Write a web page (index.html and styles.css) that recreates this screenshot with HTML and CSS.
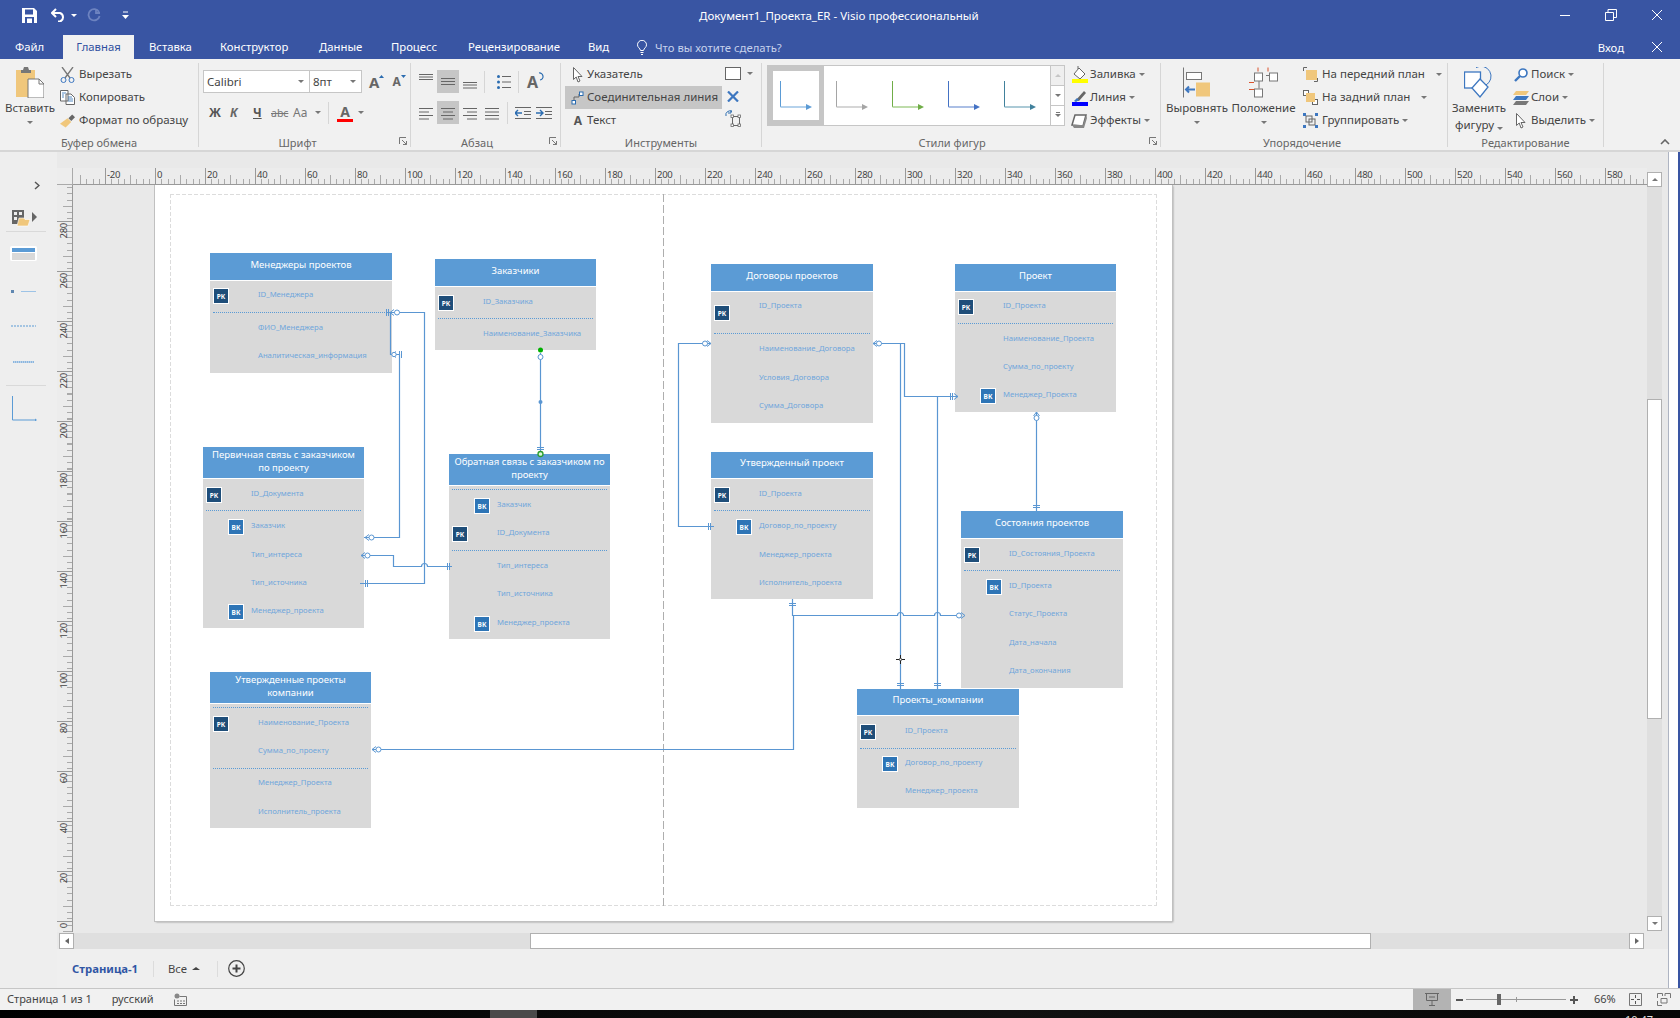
FILE: index.html
```html
<!DOCTYPE html>
<html lang="ru">
<head>
<meta charset="utf-8">
<title>Документ1_Проекта_ER - Visio профессиональный</title>
<link rel="stylesheet" href="styles.css">
</head>
<body>
<div class="app">
  <header class="titlebar">
    <div class="qat">
      <svg class="q-save" width="15" height="15" viewBox="0 0 15 15"><path d="M0 0H12L15 3V15H0Z" fill="#fff"/><rect x="3" y="1.5" width="8" height="5" fill="#3955a3"/><rect x="3" y="9" width="9" height="6" fill="#3955a3"/><rect x="5" y="10.5" width="5" height="4.5" fill="#fff"/></svg>
      <svg class="q-undo" width="15" height="14" viewBox="0 0 15 14"><path d="M5 1L1 5L5 9M1 5H9A4.5 4.5 0 0 1 9 13.5H7" fill="none" stroke="#fff" stroke-width="2"/></svg>
      <span class="caret white q-c1"></span>
      <svg class="q-redo" width="14" height="14" viewBox="0 0 14 14"><path d="M9 1V5H13M12 4A5.6 5.6 0 1 0 12.6 8" fill="none" stroke="#6d83c0" stroke-width="1.8"/></svg>
      <svg class="q-more" width="7" height="8" viewBox="0 0 7 8"><path d="M1 1H6" stroke="#fff"/><path d="M0 4H7L3.500 8Z" fill="#fff"/></svg>
    </div>
    <div class="doc-title">Документ1_Проекта_ER - Visio профессиональный</div>
    <div class="winctl">
      <svg width="12" height="12" viewBox="0 0 12 12"><path d="M1 6.500H11" stroke="#fff"/></svg>
      <svg width="12" height="12" viewBox="0 0 12 12"><path d="M.5 3.500H8.500V11.500H.5ZM3 3.500V.5H11.500V8.500H8.500" fill="none" stroke="#fff"/></svg>
      <svg width="12" height="12" viewBox="0 0 12 12"><path d="M1 1L11 11M11 1L1 11" stroke="#fff"/></svg>
    </div>
  </header>
  <nav class="tabs">
    <span class="tab t-file">Файл</span>
    <span class="tab active">Главная</span>
    <span class="tab t-ins">Вставка</span>
    <span class="tab t-des">Конструктор</span>
    <span class="tab t-dat">Данные</span>
    <span class="tab t-pro">Процесс</span>
    <span class="tab t-rev">Рецензирование</span>
    <span class="tab t-vid">Вид</span>
    <svg class="lamp" width="10" height="15" viewBox="0 0 10 15"><path d="M3.500 10.500C3 8 .5 7.500.5 4.800A4.500 4.500 0 0 1 9.500 4.800C9.500 7.500 7 8 6.500 10.500ZM3.500 12.500H6.500M4 14.500H6" fill="none" stroke="#fff"/></svg>
    <span class="tell">Что вы хотите сделать?</span>
    <span class="login">Вход</span>
    <svg class="login-x" width="12" height="12" viewBox="0 0 12 12"><path d="M1 1L11 11M11 1L1 11" stroke="#fff"/></svg>
  </nav>

  <section class="ribbon">
    <div class="group g1">
      <div class="content">
        <div class="big b-paste">
          <svg width="28" height="31" viewBox="0 0 28 31"><path d="M0 3H19V30H0Z" fill="#f0c77c"/><path d="M5 3H7L8 0H12L13 3H15V6H5Z" fill="#777"/><path d="M12 12H23L28 17V31H12Z" fill="#fff" stroke="#777"/><path d="M23 12V17H28" fill="none" stroke="#777"/></svg>
          <span>Вставить</span><i class="caret"></i>
        </div>
        <div class="stack s1">
          <div class="cmd"><svg width="15" height="16" viewBox="0 0 15 16"><path d="M2 0L10 11M13 0L5 11" stroke="#777" stroke-width="1.300"/><circle cx="3.500" cy="13" r="2.500" fill="none" stroke="#3d77c0"/><circle cx="11.500" cy="13" r="2.500" fill="none" stroke="#3d77c0"/></svg><span>Вырезать</span></div>
          <div class="cmd"><svg width="15" height="15" viewBox="0 0 15 15"><path d="M.5.5H8V11H.5ZM6 4H11L14.500 7.500V14.500H6Z" fill="#fff" stroke="#666"/><path d="M2 3H6M2 5H4M2 7H4M8 7H12M8 9H13M8 11H13" stroke="#2b6cb0" stroke-width=".8"/></svg><span>Копировать</span></div>
          <div class="cmd"><svg width="16" height="14" viewBox="0 0 16 14"><path d="M0 10L8 4L12 8L6 14Z" fill="#f0c77c"/><path d="M9 4L13 0L16 3L12 7Z" fill="#666"/></svg><span>Формат по образцу</span></div>
        </div>
      </div>
      <div class="glabel">Буфер обмена</div>
    </div>
    <i class="gsep"></i>
    <div class="group g2">
      <div class="content col">
        <div class="fontrow">
          <div class="combo c-font">Calibri<i class="caret"></i></div>
          <div class="combo c-size">8пт<i class="caret"></i></div>
          <span class="grow">A<svg width="5" height="3" viewBox="0 0 5 3"><path d="M0 3L2.500 0L5 3Z" fill="#2b6cb0"/></svg></span>
          <span class="shrink">A<svg width="5" height="3" viewBox="0 0 5 3"><path d="M0 0L2.500 3L5 0Z" fill="#2b6cb0"/></svg></span>
        </div>
        <div class="fmtrow">
          <b class="f-b">Ж</b><b class="f-i">К</b><b class="f-u">Ч</b><span class="f-s">abc</span><span class="f-a">Аа</span><i class="caret"></i><i class="vsep"></i>
          <span class="f-color">A</span><i class="caret"></i>
        </div>
      </div>
      <div class="glabel">Шрифт</div>
      <svg class="launcher" width="8" height="8" viewBox="0 0 8 8"><path d="M.5 7V.5H7M3 3L7.500 7.500M7.500 4V7.500H4" fill="none" stroke="#777"/></svg>
    </div>
    <i class="gsep"></i>
    <div class="group g3">
      <div class="content col">
        <div class="prow">
          <span class="pc"><svg width="14" height="23" viewBox="0 0 14 23"><path d="M0 4.500H14M0 7H14M0 9.500H14" stroke="#666"/></svg></span>
          <span class="pc on"><svg width="14" height="23" viewBox="0 0 14 23"><path d="M0 8.500H14M0 11.500H14M0 14.500H14" stroke="#666"/></svg></span>
          <span class="pc"><svg width="14" height="23" viewBox="0 0 14 23"><path d="M0 12.500H14M0 15H14M0 18H14" stroke="#666"/></svg></span>
          <i class="vsep"></i>
          <span class="pc nar"><svg width="14" height="16" viewBox="0 0 14 16"><path d="M5 2.500H14M5 8H14M5 13.500H14" stroke="#666"/><circle cx="1.500" cy="2.500" r="1.500" fill="#2b6cb0"/><circle cx="1.500" cy="8" r="1.500" fill="#2b6cb0"/><circle cx="1.500" cy="13.500" r="1.500" fill="#2b6cb0"/></svg></span>
          <i class="vsep"></i>
          <span class="rotA">A<svg width="7" height="9" viewBox="0 0 7 9"><path d="M1 1A3.500 3.500 0 1 1 2 8" fill="none" stroke="#2b6cb0" stroke-width="1.200"/></svg></span>
        </div>
        <div class="prow r2">
          <span class="pc"><svg width="14" height="14" viewBox="0 0 14 14"><path d="M0 2.500H14M0 6H10M0 9.500H14M0 13H10" stroke="#666"/></svg></span>
          <span class="pc on"><svg width="14" height="14" viewBox="0 0 14 14"><path d="M0 2.500H14M2 6H12M0 9.500H14M2 13H12" stroke="#666"/></svg></span>
          <span class="pc"><svg width="14" height="14" viewBox="0 0 14 14"><path d="M0 2.500H14M4 6H14M0 9.500H14M4 13H14" stroke="#666"/></svg></span>
          <span class="pc"><svg width="14" height="14" viewBox="0 0 14 14"><path d="M0 2.500H14M0 6H14M0 9.500H14M0 13H14" stroke="#666"/></svg></span>
          <i class="vsep"></i>
          <span class="pc ind"><svg width="16" height="14" viewBox="0 0 16 14"><path d="M0 7H7M3 4L0 7L3 10" fill="none" stroke="#2b6cb0" stroke-width="1.400"/><path d="M0 1.500H16M9 5.500H16M9 8.500H16M0 12.500H16" stroke="#666"/></svg></span>
          <span class="pc ind2"><svg width="16" height="14" viewBox="0 0 16 14"><path d="M0 7H7M4 4L7 7L4 10" fill="none" stroke="#2b6cb0" stroke-width="1.400"/><path d="M0 1.500H16M9 5.500H16M9 8.500H16M0 12.500H16" stroke="#666"/></svg></span>
        </div>
      </div>
      <div class="glabel">Абзац</div>
      <svg class="launcher" width="8" height="8" viewBox="0 0 8 8"><path d="M.5 7V.5H7M3 3L7.500 7.500M7.500 4V7.500H4" fill="none" stroke="#777"/></svg>
    </div>
    <i class="gsep"></i>
    <div class="group g4">
      <div class="content">
        <div class="stack s4">
          <div class="tool"><svg width="10" height="16" viewBox="0 0 10 16"><path d="M.5.5V12.500L3.200 10L5 15L7 14L5 9.500H9Z" fill="#fff" stroke="#666"/></svg><span>Указатель</span></div>
          <div class="tool sel"><svg width="14" height="14" viewBox="0 0 14 14"><path d="M3 9.500V6H8V3" fill="none" stroke="#666"/><rect x="1" y="9.500" width="3.500" height="3.500" fill="#fff" stroke="#2b6cb0"/><rect x="8.500" y="1" width="3.500" height="3.500" fill="#fff" stroke="#2b6cb0"/></svg><span>Соединительная линия</span></div>
          <div class="tool"><b class="tool-a">A</b><span>Текст</span></div>
        </div>
        <div class="tool-side">
          <div class="ts-top"><i class="rectico"></i><i class="caret"></i></div>
          <svg class="ts-x" width="12" height="11" viewBox="0 0 12 11"><path d="M1 .5L11 10.500M11 .5L1 10.500" stroke="#3d77c0" stroke-width="2.200"/></svg>
          <svg class="ts-r" width="16" height="17" viewBox="0 0 16 17"><path d="M7.500 6.500H14.500V15.500H7.500Z" fill="none" stroke="#666"/><rect x="6" y="5" width="2.500" height="2.500" fill="#fff" stroke="#666" stroke-width=".8"/><rect x="13" y="5" width="2.500" height="2.500" fill="#fff" stroke="#666" stroke-width=".8"/><rect x="6" y="14" width="2.500" height="2.500" fill="#fff" stroke="#666" stroke-width=".8"/><rect x="13" y="14" width="2.500" height="2.500" fill="#fff" stroke="#666" stroke-width=".8"/><path d="M1 6A4 4 0 0 1 7 1.500M6 0V3H3" fill="none" stroke="#2b6cb0"/></svg>
        </div>
      </div>
      <div class="glabel">Инструменты</div>
    </div>
    <i class="gsep"></i>
    <div class="group g5">
      <div class="content">
        <div class="gallery">
          <div class="gcell on"><svg width="32" height="29" viewBox="0 0 32 29"><path d="M.5 0V26" stroke="#5b9bd5"/><path d="M.5 26H26" stroke="#9dc3e6" stroke-width="1.500"/><path d="M26 23L32 26L26 29Z" fill="#5b9bd5"/></svg></div>
          <div class="gcell"><svg width="32" height="29" viewBox="0 0 32 29"><path d="M.5 0V26" stroke="#a5a5a5"/><path d="M.5 26H26" stroke="#c9c9c9" stroke-width="1.500"/><path d="M26 23L32 26L26 29Z" fill="#a5a5a5"/></svg></div>
          <div class="gcell"><svg width="32" height="29" viewBox="0 0 32 29"><path d="M.5 0V26" stroke="#70ad47"/><path d="M.5 26H26" stroke="#a9d18e" stroke-width="1.500"/><path d="M26 23L32 26L26 29Z" fill="#70ad47"/></svg></div>
          <div class="gcell"><svg width="32" height="29" viewBox="0 0 32 29"><path d="M.5 0V26" stroke="#4472c4"/><path d="M.5 26H26" stroke="#8faadc" stroke-width="1.500"/><path d="M26 23L32 26L26 29Z" fill="#4472c4"/></svg></div>
          <div class="gcell"><svg width="32" height="29" viewBox="0 0 32 29"><path d="M.5 0V26" stroke="#41819c"/><path d="M.5 26H26" stroke="#8fb9c9" stroke-width="1.500"/><path d="M26 23L32 26L26 29Z" fill="#41819c"/></svg></div>
          <div class="gscroll">
            <span class="dis"><i class="caret up"></i></span>
            <span><i class="caret"></i></span>
            <span class="more"><i class="caret"></i></span>
          </div>
        </div>
        <div class="stack s5">
          <div class="cmd"><svg width="17" height="18" viewBox="0 0 17 18"><path d="M3 8L8 2L14 8L9 13Z" fill="#fff" stroke="#666"/><path d="M7 3V0" stroke="#666"/><rect x="1" y="13" width="16" height="4" fill="#ffff00"/></svg><span>Заливка</span><i class="caret"></i></div>
          <div class="cmd"><svg width="17" height="18" viewBox="0 0 17 18"><path d="M5 11L13 2L15 4L8 12Z" fill="#666"/><path d="M3 12L6 9L8 11L5 13Z" fill="#3d77c0"/><rect x="1" y="13" width="16" height="4" fill="#0000ff"/></svg><span>Линия</span><i class="caret"></i></div>
          <div class="cmd"><svg width="17" height="16" viewBox="0 0 17 16"><path d="M1 12L4 2H15L12 13Z" fill="#fff" stroke="#666" stroke-width="1.500"/><path d="M1 12H12L15 2L16 5L13 15H3Z" fill="#888"/></svg><span>Эффекты</span><i class="caret"></i></div>
        </div>
      </div>
      <div class="glabel">Стили фигур</div>
      <svg class="launcher" width="8" height="8" viewBox="0 0 8 8"><path d="M.5 7V.5H7M3 3L7.500 7.500M7.500 4V7.500H4" fill="none" stroke="#777"/></svg>
    </div>
    <i class="gsep"></i>
    <div class="group g6">
      <div class="content">
        <div class="big b-align">
          <svg width="28" height="30" viewBox="0 0 28 30"><path d="M.5 0V30" stroke="#777"/><rect x="3.500" y="5" width="15" height="7" fill="#fff" stroke="#777"/><rect x="13" y="15" width="14" height="14" fill="#f0c77c"/><path d="M3 22H12M6 19L3 22L6 25" fill="none" stroke="#3d77c0" stroke-width="2"/></svg>
          <span>Выровнять</span><i class="caret"></i>
        </div>
        <div class="big b-pos">
          <svg width="30" height="30" viewBox="0 0 30 30"><path d="M10 13V21M17 8H21" stroke="#777"/><path d="M9 0V4M19 0V4M0 15H5M0 22H5" stroke="#d9532c"/><rect x="5.500" y="5.500" width="8" height="8" fill="#fff" stroke="#777"/><rect x="20.500" y="5.500" width="8" height="8" fill="#fff" stroke="#777"/><rect x="5.500" y="21.500" width="8" height="8" fill="#fff" stroke="#777"/></svg>
          <span>Положение</span><i class="caret"></i>
        </div>
        <div class="stack s6">
          <div class="cmd"><svg width="15" height="15" viewBox="0 0 15 15"><path d="M.5 4V.5H4M11 14.500H14.500V11" fill="none" stroke="#666"/><rect x="3" y="3" width="11" height="10" fill="#f0c77c"/></svg><span>На передний план</span><i class="caret c-a"></i></div>
          <div class="cmd"><svg width="15" height="15" viewBox="0 0 15 15"><rect x=".5" y=".5" width="5" height="5" fill="#fff" stroke="#666"/><rect x="9.500" y="9.500" width="5" height="5" fill="#fff" stroke="#666"/><rect x="3" y="3" width="9" height="9" fill="#f0c77c"/></svg><span>На задний план</span><i class="caret c-b"></i></div>
          <div class="cmd"><svg width="15" height="15" viewBox="0 0 15 15"><rect x="3" y="3" width="6" height="6" fill="none" stroke="#666"/><rect x="6" y="6" width="6" height="6" fill="none" stroke="#666"/><path d="M0 0H3V3H0ZM12 0H15V3H12ZM0 12H3V15H0ZM12 12H15V15H12Z" fill="#3d77c0"/></svg><span>Группировать</span><i class="caret"></i></div>
        </div>
      </div>
      <div class="glabel">Упорядочение</div>
    </div>
    <i class="gsep"></i>
    <div class="group g7">
      <div class="content">
        <div class="big b-rep">
          <svg width="30" height="31" viewBox="0 0 30 31"><path d="M12 .6A10 10 0 1 1 22 18" fill="none" stroke="#3d77c0"/><rect x=".5" y="5" width="16" height="16" fill="#fff" stroke="#3d77c0" stroke-width="1.300"/><path d="M16 12L24 20L16 30L8 21Z" fill="#fff" stroke="#3d77c0" stroke-width="1.300"/></svg>
          <span>Заменить</span><span class="rep2">фигуру<i class="caret"></i></span>
        </div>
        <div class="stack s7">
          <div class="cmd"><svg width="14" height="14" viewBox="0 0 14 14"><circle cx="9" cy="5" r="4" fill="#fff" stroke="#3d77c0" stroke-width="1.600"/><path d="M6 8L1 13" stroke="#3d77c0" stroke-width="2.400"/></svg><span>Поиск</span><i class="caret"></i></div>
          <div class="cmd"><svg width="16" height="14" viewBox="0 0 16 14"><path d="M3 0H16L13 4H0Z" fill="#f0c77c"/><path d="M3 5H16L13 9H0Z" fill="#3d77c0"/><path d="M3 10H16L13 14H0Z" fill="#777"/></svg><span>Слои</span><i class="caret"></i></div>
          <div class="cmd"><svg width="10" height="16" viewBox="0 0 10 16"><path d="M.5.5V12.500L3.200 10L5 15L7 14L5 9.500H9Z" fill="#fff" stroke="#666"/></svg><span>Выделить</span><i class="caret"></i></div>
        </div>
      </div>
      <div class="glabel">Редактирование</div>
    </div>
    <i class="gsep"></i>
    <svg class="collapse" width="10" height="6" viewBox="0 0 10 6"><path d="M1 5L5 1L9 5" fill="none" stroke="#666" stroke-width="1.600"/></svg>
  </section>

  <main class="work">
    <aside class="stencils">
      <svg class="st-chev" width="6" height="9" viewBox="0 0 6 9"><path d="M1 1L5 4.500L1 8" fill="none" stroke="#555" stroke-width="1.500"/></svg>
      <div class="st-shapes">
        <svg width="26" height="17" viewBox="0 0 26 17"><path d="M0 0H12V14H0Z" fill="#666"/><path d="M2 2H5V5H2ZM7 2H10V5H7ZM2 7H5V10H2Z" fill="#eee"/><path d="M5 16L7 8H12L13 9.500H18L16 16Z" fill="#f0c77c" stroke="#fff" stroke-width=".6"/><path d="M20 2L25 7L20 12Z" fill="#666"/></svg>
      </div>
      <hr class="st-line">
      <div class="st-entity"><i></i><b></b></div>
      <svg class="st-pk" width="25" height="5" viewBox="0 0 25 5"><rect x="0" y="1" width="3" height="3" fill="#5f87b0"/><path d="M10 2.500H25" stroke="#9dc3e6"/></svg>
      <svg class="st-dash" width="25" height="2" viewBox="0 0 25 2"><path d="M0 1H25" stroke="#5b9bd5" stroke-dasharray="2 1"/></svg>
      <svg class="st-txt" width="21" height="4" viewBox="0 0 21 4"><path d="M0 2H21" stroke="#8ab6e0" stroke-width="2" stroke-dasharray="1.500 .5"/></svg>
      <hr class="st-line l2">
      <svg class="st-conn" width="25" height="26" viewBox="0 0 25 26"><path d="M.5 1V25H23" fill="none" stroke="#5b9bd5"/><path d="M23 23.500L25 25L23 26.500Z" fill="#5b9bd5"/></svg>
    </aside>
    <div class="drawing">
      <div class="topgap"></div>
      <div class="corner"></div>
      <div class="hruler">
        <span>-20</span><span>0</span><span>20</span><span>40</span><span>60</span><span>80</span><span>100</span><span>120</span><span>140</span><span>160</span><span>180</span><span>200</span><span>220</span><span>240</span><span>260</span><span>280</span><span>300</span><span>320</span><span>340</span><span>360</span><span>380</span><span>400</span><span>420</span><span>440</span><span>460</span><span>480</span><span>500</span><span>520</span><span>540</span><span>560</span><span>580</span>
      </div>
      <div class="vscroll">
        <span class="sbtn"><i class="caret up"></i></span>
        <div class="vtrack"><div class="vthumb"></div></div>
        <span class="sbtn"><i class="caret"></i></span>
      </div>
      <div class="vruler">
        <span></span><span><em>280</em></span><span><em>260</em></span><span><em>240</em></span><span><em>220</em></span><span><em>200</em></span><span><em>180</em></span><span><em>160</em></span><span><em>140</em></span><span><em>120</em></span><span><em>100</em></span><span><em>80</em></span><span><em>60</em></span><span><em>40</em></span><span><em>20</em></span><span><em>0</em></span>
      </div>
      <div class="canvas">
        <div class="page">
          <div class="printarea"></div>
          <div class="pagebreak"></div>

          <div class="node n-mgr"><div class="hd">Менеджеры проектов</div><div class="bd">
            <div class="row"><i class="pk">РК</i>ID_Менеджера</div><div class="sep"></div>
            <div class="row">ФИО_Менеджера</div>
            <div class="row">Аналитическая_информация</div>
          </div></div>

          <div class="node n-cust"><div class="hd">Заказчики</div><div class="bd">
            <div class="row"><i class="pk">РК</i>ID_Заказчика</div><div class="sep"></div>
            <div class="row">Наименование_Заказчика</div>
          </div></div>

          <div class="node n-prim"><div class="hd two">Первичная связь с заказчиком по проекту</div><div class="bd">
            <div class="row"><i class="pk">РК</i>ID_Документа</div><div class="sep"></div>
            <div class="row"><i class="fk">ВК</i>Заказчик</div>
            <div class="row">Тип_интереса</div>
            <div class="row">Тип_источника</div>
            <div class="row"><i class="fk">ВК</i>Менеджер_проекта</div>
          </div></div>

          <div class="node n-back"><div class="hd two">Обратная связь с заказчиком по проекту</div><div class="bd">
            <div class="sep"></div>
            <div class="row"><i class="fk">ВК</i>Заказчик</div>
            <div class="row"><i class="pk">РК</i>ID_Документа</div><div class="sep"></div>
            <div class="row">Тип_интереса</div>
            <div class="row">Тип_источника</div>
            <div class="row"><i class="fk">ВК</i>Менеджер_проекта</div>
          </div></div>

          <div class="node n-dog"><div class="hd">Договоры проектов</div><div class="bd">
            <div class="row tall"><i class="pk">РК</i><span>ID_Проекта</span></div><div class="sep"></div>
            <div class="row">Наименование_Договора</div>
            <div class="row">Условия_Договора</div>
            <div class="row">Сумма_Договора</div>
          </div></div>

          <div class="node n-prj"><div class="hd">Проект</div><div class="bd">
            <div class="row"><i class="pk">РК</i>ID_Проекта</div><div class="sep"></div>
            <div class="row">Наименование_Проекта</div>
            <div class="row">Сумма_по_проекту</div>
            <div class="row"><i class="fk">ВК</i>Менеджер_Проекта</div>
          </div></div>

          <div class="node n-utv"><div class="hd h26">Утвержденный проект</div><div class="bd">
            <div class="row"><i class="pk">РК</i>ID_Проекта</div><div class="sep"></div>
            <div class="row"><i class="fk">ВК</i>Договор_по_проекту</div>
            <div class="row">Менеджер_проекта</div>
            <div class="row">Исполнитель_проекта</div>
          </div></div>

          <div class="node n-sost"><div class="hd">Состояния проектов</div><div class="bd">
            <div class="row"><i class="pk">РК</i>ID_Состояния_Проекта</div><div class="sep"></div>
            <div class="row"><i class="fk">ВК</i>ID_Проекта</div>
            <div class="row">Статус_Проекта</div>
            <div class="row">Дата_начала</div>
            <div class="row">Дата_окончания</div>
          </div></div>

          <div class="node n-comp"><div class="hd h26">Проекты_компании</div><div class="bd">
            <div class="row"><i class="pk">РК</i>ID_Проекта</div><div class="sep"></div>
            <div class="row"><i class="fk">ВК</i>Договор_по_проекту</div>
            <div class="row">Менеджер_проекта</div>
          </div></div>

          <div class="node n-appr"><div class="hd two">Утвержденные проекты компании</div><div class="bd">
            <div class="sep"></div>
            <div class="row"><i class="pk">РК</i>Наименование_Проекта</div>
            <div class="row">Сумма_по_проекту</div><div class="sep"></div>
            <div class="row">Менеджер_Проекта</div>
            <div class="row">Исполнитель_проекта</div>
          </div></div>

          <svg class="links" width="1017" height="736" viewBox="155 185 1017 736">
            <g class="ln">
              <path d="M386.500 312.500H424.500V583.500H360"/>
              <path d="M390.500 312.500V354.500H399.500V537.500H364"/>
              <path d="M361 555.500H393.500V566.500H421.500a2.500 2.500 0 0 1 6 0H452"/>
              <path d="M540.500 353V452"/>
              <path d="M711 343.500H678.500V526.500H714"/>
              <path d="M873 343.500H904.500V396.500H958"/>
              <path d="M900.500 343.500V689"/>
              <path d="M937.500 396.500V689"/>
              <path d="M1036.500 412V511"/>
              <path d="M792.500 599V615.500H897.500a3 3 0 0 1 6 0H934.500a3 3 0 0 1 6 0H962"/>
              <path d="M793.500 615.500V749.500H372"/>
            </g>
            <g class="mk">
              <path d="M386.500 309V316M388.500 309V316M390 312.500L394 309.500M390 312.500L394 315.500"/>
              <circle cx="397" cy="312.500" r="2.500"/>
              <path d="M399.500 351V358M401.500 351V358M392 354.500L396 351.500M392 354.500L396 357.500"/>
              <circle cx="394" cy="354.500" r="2.200"/>
              <path d="M365 537.500L369 534.500M365 537.500L369 540.500"/>
              <circle cx="371.500" cy="537.500" r="2.500"/>
              <path d="M361 555.500L365 552.500M361 555.500L365 558.500"/>
              <circle cx="367.500" cy="555.500" r="2.500"/>
              <path d="M365.500 580V587M367.500 580V587"/>
              <path d="M447.500 563V570M449.500 563V570"/>
              <circle cx="540.500" cy="357" r="2.500"/>
              <path d="M537 447.500H544M537 449.500H544"/>
              <path d="M711 343.500L707 340.500M711 343.500L707 346.500"/>
              <circle cx="705" cy="343.500" r="2.500"/>
              <path d="M708.500 523V530M710.500 523V530"/>
              <path d="M873 343.500L877 340.500M873 343.500L877 346.500"/>
              <circle cx="879" cy="343.500" r="2.500"/>
              <path d="M952.500 393V400M950.500 393V400M958 396.500L954 393.500M958 396.500L954 399.500"/>
              <path d="M897 683.500H904M897 685.500H904M934 683.500H941M934 685.500H941"/>
              <path d="M1036.500 412L1033.500 416M1036.500 412L1039.500 416"/>
              <circle cx="1036.500" cy="418" r="2.500"/>
              <path d="M1033 505.500H1040M1033 507.500H1040"/>
              <path d="M789 603.500H796M789 605.500H796"/>
              <path d="M965 615.500L961 612.500M965 615.500L961 618.500"/>
              <circle cx="959" cy="615.500" r="2.500"/>
              <path d="M372 749.500L376 746.500M372 749.500L376 752.500"/>
              <circle cx="378.500" cy="749.500" r="2.500"/>
            </g>
            <circle class="dot" cx="540.500" cy="402" r="2"/>
            <circle class="gr" cx="540.500" cy="350" r="2.500"/>
            <circle class="gr2" cx="540.500" cy="454" r="2.500"/>
            <path class="cur" d="M896 659.500H905M900.500 655V664"/>
            <circle class="curc" cx="900.500" cy="659.500" r="1.200"/>
          </svg>
        </div>
      </div>
      <div class="hscroll">
        <span class="sbtn"><i class="caret left"></i></span>
        <div class="htrack"><div class="hthumb"></div></div>
        <span class="sbtn"><i class="caret right"></i></span>
      </div>
      <div class="pagetabs">
        <span class="ptab">Страница-1</span>
        <i class="psep"></i>
        <span class="pall">Все<i class="caret up dark"></i></span>
        <i class="psep"></i>
        <svg class="padd" width="17" height="17" viewBox="0 0 17 17"><circle cx="8.500" cy="8.500" r="7.800" fill="none" stroke="#444" stroke-width="1.200"/><path d="M8.500 4.500V12.500M4.500 8.500H12.500" stroke="#444" stroke-width="2"/></svg>
      </div>
    </div>
    <div class="strip"></div>
  </main>

  <footer class="status">
    <span class="st-page">Страница 1 из 1</span>
    <span class="st-lang">русский</span>
    <svg class="st-macro" width="13" height="13" viewBox="0 0 13 13"><circle cx="3" cy="3" r="2.500" fill="#888"/><path d="M5.500 3.500H12.500V12.500H.5V6.500" fill="none" stroke="#777"/><path d="M3 8H5M6 8H8M9 8H11M3 10.500H5M6 10.500H8M9 10.500H11" stroke="#777"/></svg>
    <span class="st-pres"><svg width="14" height="13" viewBox="0 0 14 13"><path d="M0 .5H14M1.500 .5V7.500H12.500V.5M4 4H10M7 7.500V12M4 12.500H10" fill="none" stroke="#666"/></svg></span>
    <div class="zoom">
      <i class="z-minus"></i>
      <div class="z-track"><i class="z-thumb"></i><i class="z-mid"></i></div>
      <svg width="8" height="8" viewBox="0 0 8 8"><path d="M4 0V8M0 4H8" stroke="#555" stroke-width="2"/></svg>
      <span class="z-pct">66%</span>
      <svg class="z-fit" width="13" height="13" viewBox="0 0 13 13"><path d="M.5.5H12.500V12.500H.5Z" fill="none" stroke="#777"/><path d="M6.500 2V5M6.500 8V11M2 6.500H5M8 6.500H11" stroke="#555"/></svg>
      <svg class="z-page" width="14" height="13" viewBox="0 0 14 13"><path d="M.5 5V.5H5.500V3M8 3V.5H13.500V5M.5 8V12.500H5M4 5.500H10V10H4Z" fill="none" stroke="#777"/></svg>
    </div>
  </footer>
  <div class="taskbar"><i class="task-btn"></i><span class="clock">10:47</span></div>
</div>
</body>
</html>
```

FILE: styles.css
```css
*{box-sizing:border-box}
html,body{margin:0;padding:0;overflow:hidden}
body{font-family:"Noto Sans","Open Sans",sans-serif;font-size:11.500px;color:#444;background:#f1f1f1}
i,em{font-style:normal}
.app{width:1680px;height:1018px;display:flex;flex-direction:column;overflow:hidden}
svg{display:block;flex:none}

.caret{display:inline-block;width:0;height:0;border:3px solid transparent;border-top:3.500px solid #777;border-bottom:0;flex:none}
.caret.up{border-top:0;border-bottom:3.500px solid #777}
.caret.white{border-top-color:#fff}
.caret.left{border:3px solid transparent;border-right:4px solid #666;border-left:0}
.caret.right{border:3px solid transparent;border-left:4px solid #666;border-right:0}
.caret.dark{border-bottom-color:#444}

.titlebar{height:35px;background:#3955a3;display:flex;align-items:center;position:relative;color:#fff;flex:none}
.qat{display:flex;align-items:center;padding-left:22px;position:absolute;left:0;top:0;height:30px}
.q-undo{margin-left:14px}
.q-c1{margin-left:5px}
.q-redo{margin-left:10px}
.q-more{margin-left:21px}
.doc-title{font-size:11.500px;position:absolute;left:699px;top:8px;white-space:nowrap;color:#fff}
.winctl{position:absolute;right:17px;top:9px;display:flex;gap:34px}
.tabs{height:24px;background:#3955a3;display:flex;align-items:center;color:#fff;font-size:11.300px;position:relative;flex:none}
.tab{white-space:nowrap;flex:none;padding-bottom:1px}
.t-file{margin-left:15px;width:48px}
.tab.active{width:71px;height:24px;background:#f1f1f1;color:#2f4f9f;text-align:center;line-height:23px}
.t-ins{margin-left:15px;width:71px}
.t-des{width:99px}
.t-dat{width:72px}
.t-pro{width:77px}
.t-rev{width:120px}
.t-vid{width:49px}
.tell{margin-left:8px;color:#c7d2ec}
.login{margin-left:auto;margin-right:27px}
.login-x{margin-right:17px}

.ribbon{height:93px;background:#f1f1f1;border-bottom:2px solid #d6d6d6;display:flex;position:relative;flex:none}
.group{position:relative;display:flex;flex-direction:column;height:91px;padding-top:4px;flex:none}
.gsep{width:1px;height:84px;margin-top:4px;background:#d6d6d6;flex:none}
.content{display:flex;height:72px;flex:none}
.content.col{flex-direction:column}
.glabel{height:16px;line-height:15px;margin-top:auto;text-align:center;font-size:11px;color:#666;white-space:nowrap}
.launcher{position:absolute;right:3px;bottom:5px}
.g1{width:198px}
.g2{width:211px}
.g2 .glabel{padding-right:14px}
.g3{width:149px}
.g3 .glabel{padding-right:17px}
.g4{width:200px}
.g5{width:398px}
.g5 .glabel{padding-right:18px}
.g6{width:286px}
.g6 .glabel{padding-right:4px}
.g7{width:155px}

.big{display:flex;flex-direction:column;align-items:center;padding-top:4px;white-space:nowrap;line-height:14px}
.big svg{margin-bottom:3px;height:31px}
.big .caret{margin-top:6px}
.b-paste{width:48px;margin-left:6px}
.stack{display:grid;grid-template-rows:repeat(3,23px)}
.cmd{display:flex;align-items:center;white-space:nowrap}
.cmd span{margin-top:-2px}
.cmd svg{margin-right:4px}
.cmd .caret{margin-left:3px}
.s1{margin-left:6px}
.s1 .cmd svg{width:15px;margin-right:4px}

.fontrow{display:flex;align-items:center;padding:7px 0 0 4px}
.combo{height:23px;border:1px solid #c6c6c6;background:#fff;display:flex;align-items:center;justify-content:space-between;padding:0 5px 0 3px}
.c-font{width:107px}
.c-size{width:52px;border-left:0}
.grow,.shrink{display:flex;align-items:flex-start;color:#666;font-weight:700;line-height:18px}
.grow{font-size:15px;margin-left:7px}
.shrink{font-size:12px;margin-left:8px}
.grow svg,.shrink svg{margin-top:2px}
.fmtrow{display:flex;align-items:center;height:23px;margin-top:8px;color:#555}
.f-b{margin-left:10px;font-size:12px;width:21px}
.f-i{font-style:italic;font-size:12px;width:23px;color:#666}
.f-u{font-size:12px;width:18px;text-decoration:underline;color:#555}
.f-s{font-size:10.500px;width:22px;text-decoration:line-through;color:#777}
.f-a{font-size:12px;width:21px;color:#777}
.fmtrow>.caret{margin-left:1px}
.vsep{display:block;width:1px;height:22px;background:#d6d6d6;flex:none}
.fmtrow .vsep{margin-left:7px}
.f-color{margin-left:8px;width:16px;text-align:center;font-weight:700;font-size:14px;line-height:15px;border-bottom:3px solid #f00;color:#666}
.fmtrow .f-color + .caret{margin-left:5px}

.prow{display:flex;align-items:center;height:23px;margin:7px 0 0 4px}
.prow.r2{margin-top:8px}
.pc{width:22px;height:23px;display:flex;align-items:center;justify-content:center;flex:none}
.pc.on{background:#c6c6c6}
.prow .vsep{margin:0 3px}
.pc.nar{margin-left:5px}
.rotA{display:flex;font-weight:700;font-size:16px;color:#666;margin-left:5px;line-height:20px}
.prow.r2 .vsep{margin:0 6px 0 4px}
.pc.ind{width:18px}
.pc.ind2{width:18px;margin-left:3px}

.s4{margin-left:4px;width:157px}
.tool{display:flex;align-items:center;white-space:nowrap;padding-left:6px}
.tool span{margin-top:-2px}
.tool>svg{width:14px;margin-right:2px}
.tool.sel{background:#c6c6c6}
.tool-a{width:14px;margin-right:2px;text-align:center;font-size:12px;color:#555}
.tool-side{margin-left:3px;display:flex;flex-direction:column;align-items:flex-start;padding-top:4px}
.ts-top{display:flex;align-items:center;gap:6px}
.rectico{width:16px;height:13px;background:#fff;border:1px solid #666;display:block}
.ts-x{margin:11px 0 0 2px}
.ts-r{margin:8px 0 0 0}

.gallery{width:298px;height:61px;margin:2px 0 0 5px;border:1px solid #c6c6c6;background:#fff;display:flex;flex:none;position:relative}
.gcell{width:56px;height:59px;display:flex;padding:15px 0 0 12px;flex:none}
.gcell.on{border:5px solid #c6c6c6;padding:10px 0 0 7px}
.gscroll{position:absolute;right:0;top:0;bottom:0;width:14px;display:flex;flex-direction:column;border-left:1px solid #c6c6c6;background:#fff}
.gscroll span{flex:1;display:flex;align-items:center;justify-content:center;border-bottom:1px solid #c6c6c6}
.gscroll span:last-child{border-bottom:0}
.gscroll .dis{background:#efefef}
.gscroll .dis .caret{border-bottom-color:#c6c6c6}
.gscroll .more .caret{box-shadow:0 -3px 0 -1px #777}
.s5{margin-left:6px}
.s5 .cmd svg{margin-right:2px}

.b-align{width:70px;margin-left:1px}
.b-pos{width:63px}
.s6{margin-left:8px}
.c-a{margin-left:11px!important}
.c-b{margin-left:11px!important}
.b-rep{width:62px}
.rep2{display:flex;align-items:center;gap:3px;margin-top:3px}
.s7{margin-left:3px}
.s7 .cmd svg{width:16px;margin-right:2px}
.collapse{position:absolute;right:10px;bottom:5px}

.work{flex:1;display:flex;background:#e9e9e9;min-height:0}
.stencils{width:57px;background:#eeeeee;display:flex;flex-direction:column;padding-top:29px;flex:none;align-items:flex-start}
.st-chev{margin-left:34px}
.st-shapes{margin:20px 0 0 12px}
.st-line{margin:4px 0 0 6px;border:0;width:40px;height:1px;background:#d9d9d9}
.st-entity{margin:14px 0 0 10px;width:27px;height:15px;padding:2px;background:#fff;border-radius:2px}
.st-entity i{display:block;height:4px;background:#5b9bd5}
.st-entity b{display:block;height:7px;background:#d9d9d9;margin-top:1px}
.st-pk{margin:28px 0 0 11px}
.st-dash{margin:31px 0 0 11px}
.st-txt{margin:33px 0 0 13px}
.st-line.l2{margin-top:21px}
.st-conn{margin:9px 0 0 12px}

.drawing{flex:1;display:grid;grid-template-columns:16px 1574px 21px;grid-template-rows:16px 17px 748px 16px 39px;min-width:0}
.topgap{grid-column:1/4}
.corner{background:#ededed;border-bottom:1px solid #aaa;border-right:1px solid #aaa}
.hruler{overflow:hidden;display:flex;padding-left:32px;border-bottom:1px solid #999;background-color:#ececec;
  background-image:repeating-linear-gradient(90deg,#aaa 0 1px,transparent 1px 6.250px),repeating-linear-gradient(90deg,#aaa 0 1px,transparent 1px 25px);
  background-size:100% 5px,100% 9px;background-position:7px 100%,7px 100%;background-repeat:no-repeat}
.hruler span{flex:0 0 50px;border-left:1px solid #999;padding-left:1px;font-size:9.500px;line-height:14px;color:#444;letter-spacing:-.3px;white-space:nowrap}
.vscroll{grid-row:2/4;grid-column:3;margin:4px 6px 2px 0;display:flex;flex-direction:column;background:#dfdfdf}
.sbtn{display:flex;align-items:center;justify-content:center;width:15px;height:15px;background:#fff;border:1px solid #b0b0b0;flex:none}
.vtrack{flex:1;padding-top:212px}
.vthumb{height:320px;background:#fff;border:1px solid #b0b0b0}
.vruler{overflow:hidden;border-right:1px solid #999;background-color:#ececec;display:flex;flex-direction:column;height:747px;
  background-image:repeating-linear-gradient(0deg,#aaa 0 1px,transparent 1px 6.250px),repeating-linear-gradient(0deg,#aaa 0 1px,transparent 1px 25px);
  background-size:5px 100%,9px 100%;background-position:100% 0,100% 0;background-repeat:no-repeat}
.vruler span{flex:0 0 50px;border-top:1px solid #999;display:block;padding-top:1px}
.vruler span:first-child{flex-basis:36px;border-top:0}
.vruler em{display:block;writing-mode:vertical-rl;transform:rotate(180deg);font-size:9.500px;line-height:11px;letter-spacing:-.3px;color:#444;width:11px;margin-left:1px}
.canvas{padding-left:82px;overflow:hidden;background:#e9e9e9}
.page{width:1017px;height:736px;background:#fff;position:relative;box-shadow:0 0 0 1px #c0c0c0,1px 1px 2px #888}
.printarea{position:absolute;left:15px;top:9px;width:987px;height:712px;
  background-image:repeating-linear-gradient(90deg,#dcdcdc 0 4px,transparent 4px 6px),repeating-linear-gradient(90deg,#dcdcdc 0 4px,transparent 4px 6px),repeating-linear-gradient(0deg,#dcdcdc 0 4px,transparent 4px 6px),repeating-linear-gradient(0deg,#dcdcdc 0 4px,transparent 4px 6px);
  background-size:100% 1px,100% 1px,1px 100%,1px 100%;background-position:0 0,0 100%,0 0,100% 0;background-repeat:no-repeat}
.pagebreak{position:absolute;left:508px;top:9px;width:1px;height:712px;background:repeating-linear-gradient(180deg,#aeaeae 0 8px,transparent 8px 11px)}

.node{position:absolute;display:flex;flex-direction:column}
.hd{height:27px;margin-bottom:1px;background:#5b9bd5;color:#fff;font-size:9.500px;line-height:12.500px;text-align:center;display:flex;align-items:center;justify-content:center;padding:0 2px 3px;flex:none}
.hd.two{height:31px;padding:0 3px 2px}
.hd.h26{height:26px}
.bd{flex:1;background:#d9d9d9;display:grid;align-content:start}
.row{position:relative;display:flex;align-items:center;padding:0 0 2px 48px;color:#6fa6dc;font-size:7.700px;white-space:nowrap}
.row.tall span{margin-top:-13px}
.sep{align-self:center;height:0;border-top:1px dotted #5b9bd5;margin:0 3px}
.pk,.fk{position:absolute;top:50%;margin-top:-7px;width:16px;height:16px;border:1px solid #fff;color:#fff;font-size:6.500px;font-weight:700;display:flex;align-items:center;justify-content:center}
.pk{left:3px;background:#1f4e79}
.fk{left:25px;background:#2e75b6}
.n-mgr{left:55px;top:68px;width:182px;height:120px}
.n-mgr .bd{grid-template-rows:28px 6px 26px 30px}
.n-cust{left:280px;top:74px;width:161px;height:91px}
.n-cust .bd{grid-template-rows:30px 2px 30px}
.n-prim{left:48px;top:262px;width:161px;height:181px}
.n-prim .bd{grid-template-rows:30px 2px 30px 28px 28px 28px}
.n-back{left:294px;top:269px;width:161px;height:185px}
.n-back .bd{grid-template-rows:6px 26px 30px 4px 28px 28px 30px}
.n-dog{left:556px;top:79px;width:162px;height:159px}
.n-dog .bd{grid-template-rows:40px 2px 30px 28px 28px}
.n-prj{left:800px;top:79px;width:161px;height:148px}
.n-prj .bd{grid-template-rows:28px 6px 26px 30px 26px}
.n-utv{left:556px;top:267px;width:162px;height:147px}
.n-utv .bd{grid-template-rows:30px 2px 30px 28px 28px}
.n-sost{left:806px;top:326px;width:162px;height:177px}
.n-sost .bd{grid-template-rows:30px 2px 30px 26px 32px 24px}
.n-comp{left:702px;top:504px;width:162px;height:119px}
.n-comp .bd{grid-template-rows:30px 4px 26px 30px}
.n-appr{left:55px;top:487px;width:161px;height:156px}
.n-appr .bd{grid-template-rows:6px 26px 30px 4px 26px 32px}

.links{position:absolute;left:0;top:0;pointer-events:none}
.ln path{fill:none;stroke:#5a96d2;stroke-width:1.200}
.mk path{fill:none;stroke:#5a96d2;stroke-width:1}
.mk circle{fill:#fff;stroke:#5a96d2;stroke-width:1}
.dot{fill:#5a96d2}
.gr{fill:#00b000}
.gr2{fill:#d8f5d8;stroke:#2a9d2a;stroke-width:1.300}
.cur{stroke:#222;stroke-width:1;fill:none}
.curc{fill:#fff;stroke:#222;stroke-width:.8}

.hscroll{grid-column:1/4;margin:0 24px 0 2px;display:flex;background:#dfdfdf;height:16px}
.hscroll .sbtn{height:16px}
.htrack{flex:1;padding-left:456px}
.hthumb{width:841px;height:16px;background:#fff;border:1px solid #b0b0b0}
.pagetabs{grid-column:1/4;background:#efefef;display:flex;align-items:center;padding-left:15px;font-size:11.300px}
.ptab{color:#2f55a4;font-weight:700;width:81px;white-space:nowrap}
.psep{width:1px;height:16px;background:#dcdcdc;display:block;flex:none}
.pall{display:flex;align-items:center;gap:5px;width:63px;padding-left:14px}
.pall .caret{border-left-width:4px;border-right-width:4px}
.padd{margin-left:10px}
.strip{width:12px;background:#fff;border-left:1px solid #aeb4c2;border-right:2px solid #3955a3;flex:none}

.status{height:22px;background:#f1f1f1;border-top:1px solid #c6c6c6;display:flex;align-items:center;font-size:11px;position:relative;flex:none}
.st-page{margin:-2px 0 0 7px;white-space:nowrap}
.st-lang{margin:-2px 0 0 20px}
.st-macro{margin-left:20px}
.st-pres{margin-left:auto;width:38px;height:21px;background:#b3b3b3;display:flex;align-items:center;justify-content:center}
.zoom{display:flex;align-items:center;width:229px;padding-left:5px}
.z-minus{display:block;width:7px;height:2px;background:#555}
.z-track{position:relative;width:100px;height:1px;background:#999;margin:0 4px 0 3px}
.z-thumb{position:absolute;left:31px;top:-5px;width:4px;height:11px;background:#666}
.z-mid{position:absolute;left:50px;top:-2px;width:1px;height:5px;background:#999}
.z-pct{margin:-2px 0 0 16px;width:35px}
.z-page{margin-left:15px}
.taskbar{height:8px;background:linear-gradient(90deg,#000,#111 60%,#060606);position:relative;flex:none;overflow:hidden;display:flex}
.task-btn{display:block;margin-left:490px;width:47px;height:8px;background:#4a4a4a}
.clock{position:absolute;left:1625px;top:4px;color:#ddd;font-size:11px;line-height:12px}
```
